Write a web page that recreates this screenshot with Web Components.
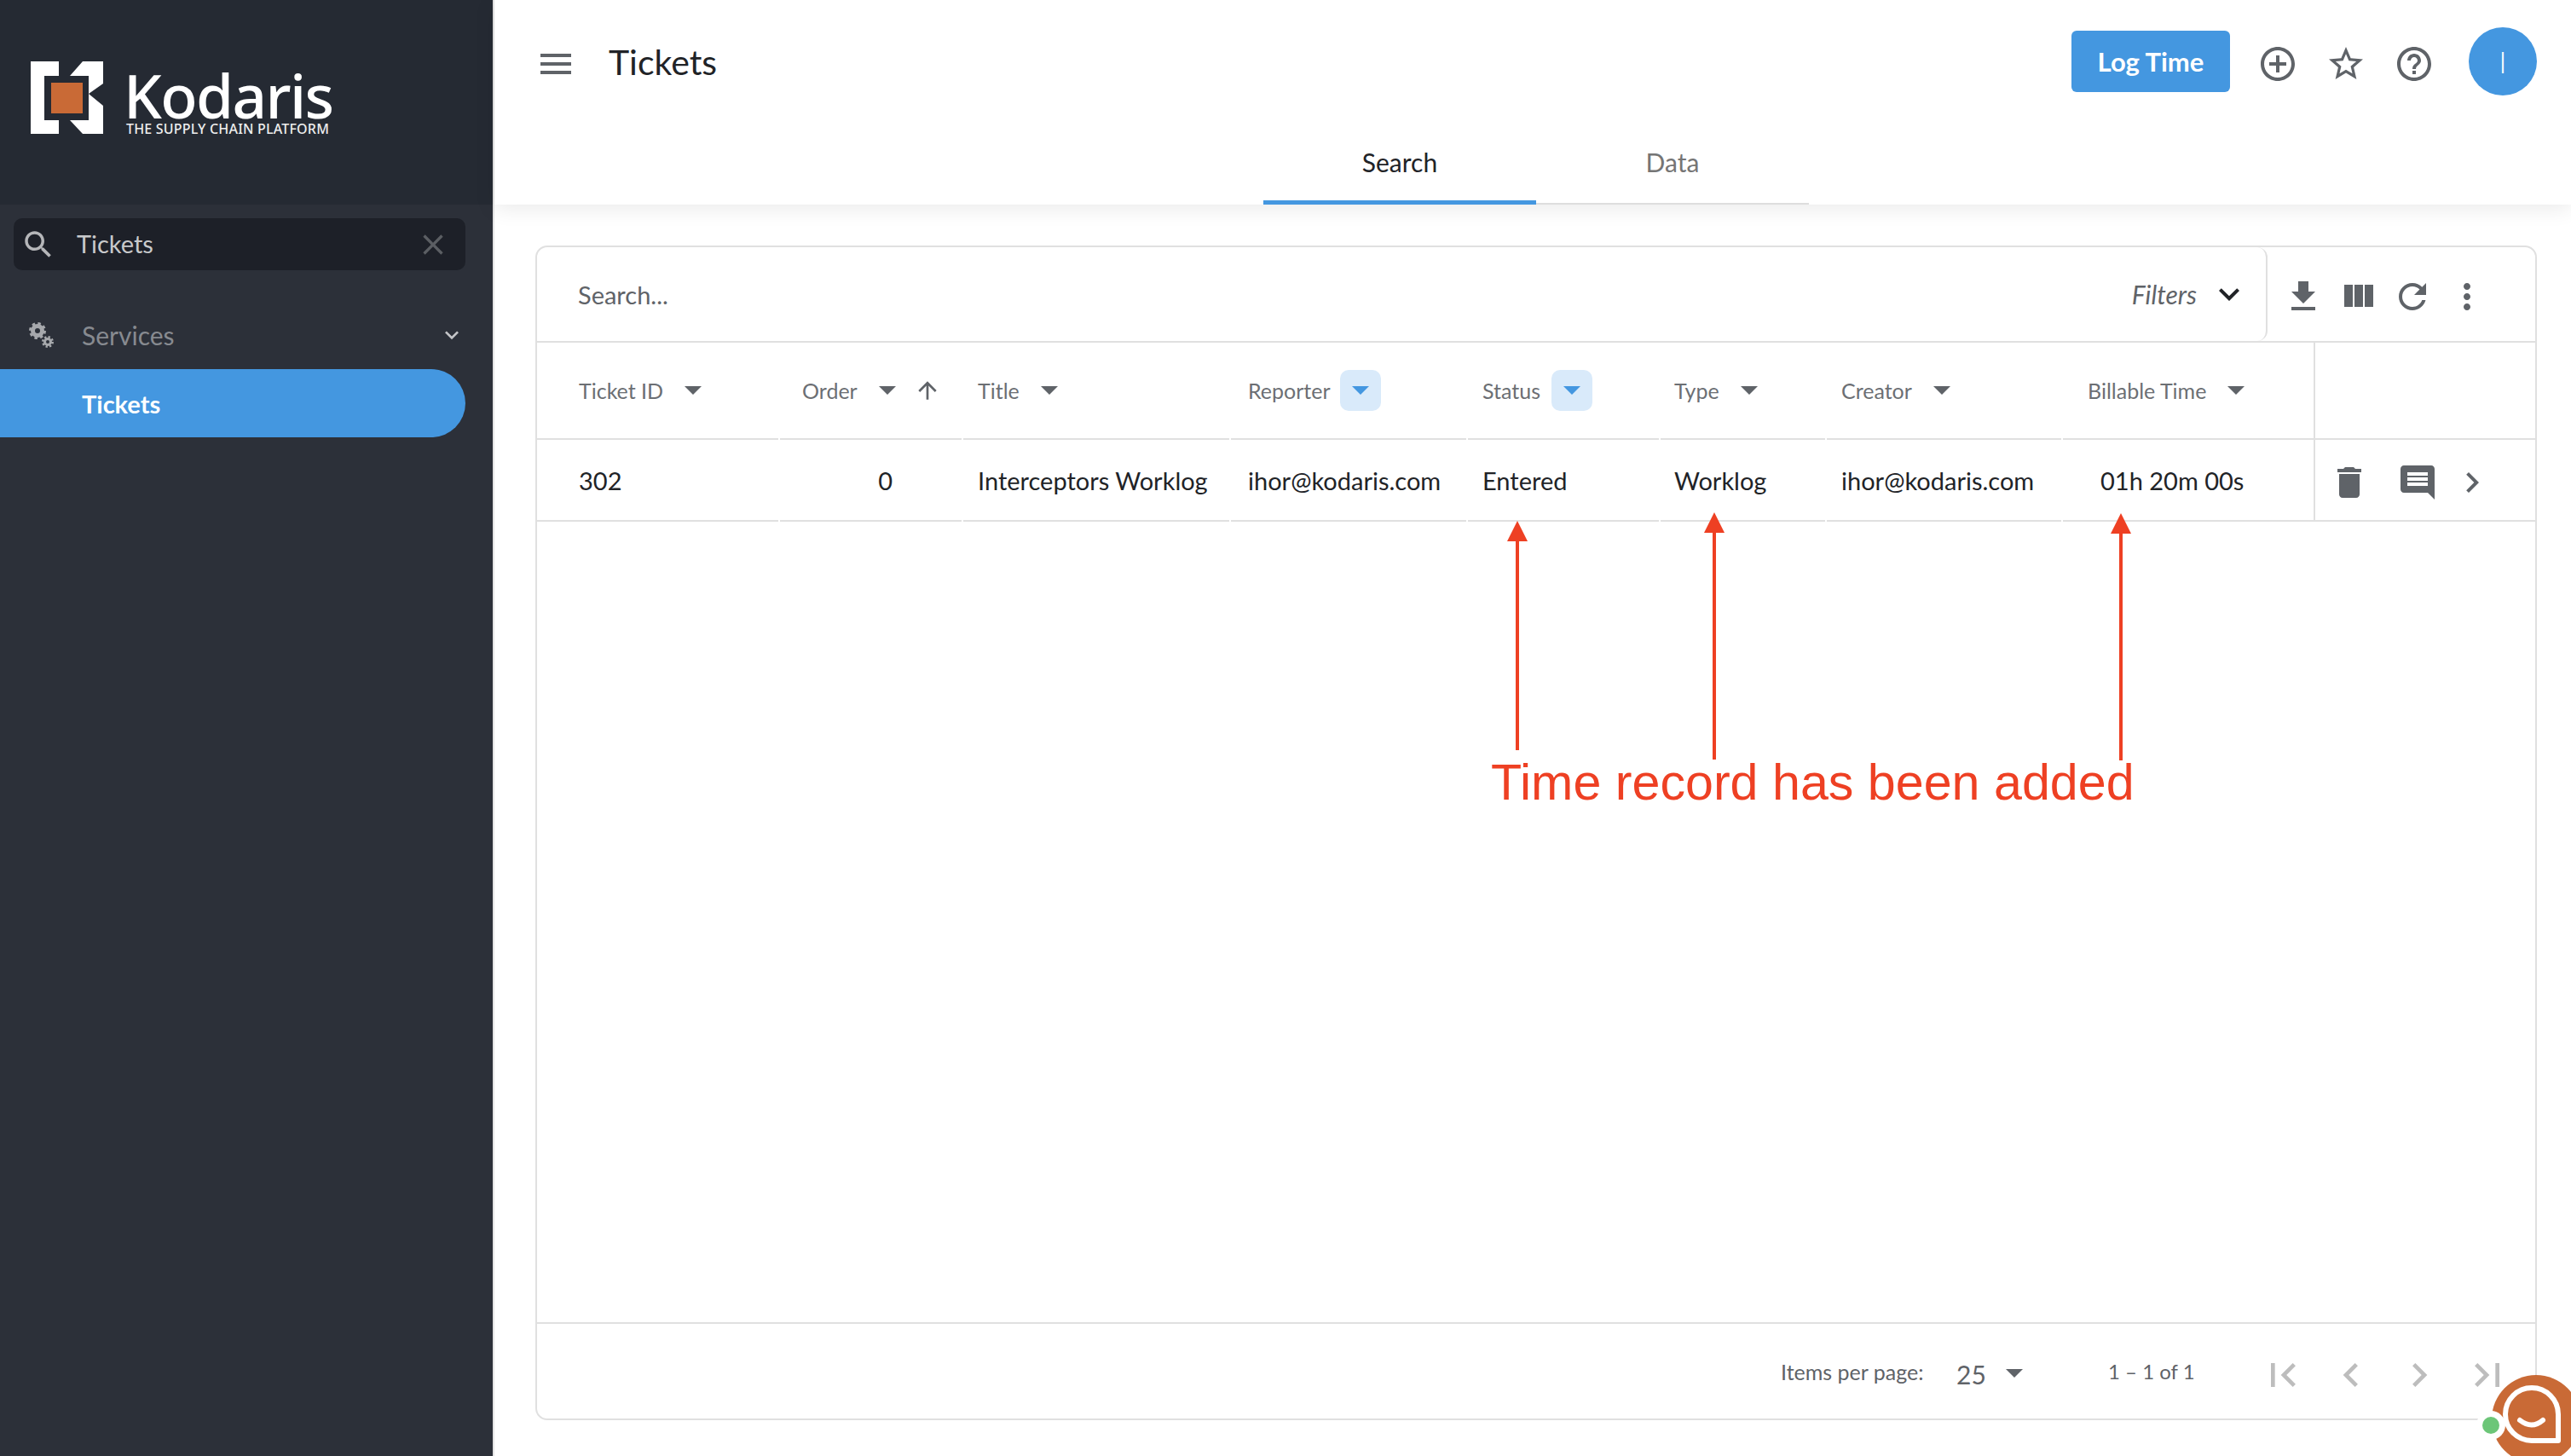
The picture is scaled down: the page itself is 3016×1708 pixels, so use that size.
<!DOCTYPE html>
<html>
<head>
<meta charset="utf-8">
<title>Tickets</title>
<style>
    html, body{ margin: 0; padding: 0; height: 100%; overflow: hidden; background: #fff; }
    body{ font-family: Lato, "Noto Sans", sans-serif; }
    k-app{ width: 3016px; height: 1708px; }
</style>
</head>
<body>
<k-app></k-app>

<script>
const ICONS = {
    menu: 'M3 18h18v-2H3v2zm0-5h18v-2H3v2zm0-7v2h18V6H3z',
    search: 'M15.5 14h-.79l-.28-.27C15.41 12.59 16 11.11 16 9.5 16 5.91 13.09 3 9.5 3S3 5.91 3 9.5 5.91 16 9.5 16c1.61 0 3.09-.59 4.23-1.57l.27.28v.79l5 4.99L20.49 19l-4.99-5zm-6 0C7.01 14 5 11.99 5 9.5S7.01 5 9.5 5 14 7.01 14 9.5 11.99 14 9.5 14z',
    close: 'M19 6.41L17.59 5 12 10.59 6.41 5 5 6.41 10.59 12 5 17.59 6.41 19 12 13.41 17.59 19 19 17.59 13.41 12z',
    down: 'M16.59 8.59L12 13.17 7.41 8.59 6 10l6 6 6-6z',
    add: 'M13 7h-2v4H7v2h4v4h2v-4h4v-2h-4V7zm-1-5C6.48 2 2 6.48 2 12s4.48 10 10 10 10-4.48 10-10S17.52 2 12 2zm0 18c-4.41 0-8-3.59-8-8s3.59-8 8-8 8 3.59 8 8-3.59 8-8 8z',
    star: 'M22 9.24l-7.19-.62L12 2 9.19 8.63 2 9.24l5.46 4.73L5.82 21 12 17.27 18.18 21l-1.63-7.03L22 9.24zM12 15.4l-3.76 2.27 1-4.28-3.32-2.88 4.38-.38L12 6.1l1.71 4.04 4.38.38-3.32 2.88 1 4.28L12 15.4z',
    help: 'M11 18h2v-2h-2v2zm1-16C6.48 2 2 6.48 2 12s4.48 10 10 10 10-4.48 10-10S17.52 2 12 2zm0 18c-4.41 0-8-3.59-8-8s3.59-8 8-8 8 3.59 8 8-3.59 8-8 8zm0-14c-2.21 0-4 1.79-4 4h2c0-1.1.9-2 2-2s2 .9 2 2c0 2-3 1.75-3 5h2c0-2.25 3-2.5 3-5 0-2.21-1.79-4-4-4z',
    download: 'M19 9h-4V3H9v6H5l7 7 7-7zM5 18v2h14v-2H5z',
    columns: 'M10 18h5V5h-5v13zm-6 0h5V5H4v13zM16 5v13h5V5h-5z',
    refresh: 'M17.65 6.35C16.2 4.9 14.21 4 12 4c-4.42 0-7.99 3.58-7.99 8s3.57 8 7.99 8c3.73 0 6.84-2.55 7.73-6h-2.08c-.82 2.33-3.04 4-5.65 4-3.31 0-6-2.69-6-6s2.69-6 6-6c1.66 0 3.14.69 4.22 1.78L13 11h7V4l-2.35 2.35z',
    more: 'M12 8c1.1 0 2-.9 2-2s-.9-2-2-2-2 .9-2 2 .9 2 2 2zm0 2c-1.1 0-2 .9-2 2s.9 2 2 2 2-.9 2-2-.9-2-2-2zm0 6c-1.1 0-2 .9-2 2s.9 2 2 2 2-.9 2-2-.9-2-2-2z',
    trash: 'M6 19c0 1.1.9 2 2 2h8c1.1 0 2-.9 2-2V7H6v12zM19 4h-3.5l-1-1h-5l-1 1H5v2h14V4z',
    comment: 'M21.99 4c0-1.1-.89-2-1.99-2H4c-1.1 0-2 .9-2 2v12c0 1.1.9 2 2 2h14l4 4-.01-18zM18 14H6v-2h12v2zm0-3H6V9h12v2zm0-3H6V6h12v2z',
    next: 'M10 6L8.59 7.41 13.17 12l-4.58 4.59L10 18l6-6z',
    prev: 'M15.41 7.41L14 6l-6 6 6 6 1.41-1.41L10.83 12z',
    first: 'M18.41 16.59L13.82 12l4.59-4.59L17 6l-6 6 6 6zM6 6h2v12H6z',
    last: 'M5.59 7.41L10.18 12l-4.59 4.59L7 18l6-6-6-6zM16 6h2v12h-2z',
    up: 'M4 12l1.41 1.41L11 7.83V20h2V7.83l5.58 5.59L20 12l-8-8-8 8z'
}

class base extends HTMLElement
{
    constructor(){
        super();
        this.shadow = this.attachShadow({mode: 'open'})
        this.shadow.innerHTML = `<style>${this.css}</style>${this.html}`
    }
    get css(){ return '' }
    get html(){ return '' }
}

customElements.define('k-icon', class kIcon extends base {
    connectedCallback(){
        const size = this.getAttribute('size') || 48;
        this.shadow.querySelector('svg').setAttribute('width', size);
        this.shadow.querySelector('svg').setAttribute('height', size);
        this.shadow.querySelector('path').setAttribute('d', ICONS[this.getAttribute('name')]);
    }
    get css(){
        return `:host{ display: block; line-height: 0; color: #5f6368; }
                svg{ display: block; fill: currentColor; }`
    }
    get html(){
        return `<svg viewBox="0 0 24 24"><path d=""/></svg>`
    }
})

customElements.define('k-logo', class kLogo extends base {
    get css(){
        return `:host{ display: flex; gap: 27px; color: #fff; }
                svg{ display: block; flex: none; }
                .words{ margin-top: 12px; }
                .name{ font: 500 71px/56px "Noto Sans", sans-serif; letter-spacing: -1.6px; margin-left: -3px; }
                .tag{ font: 500 16px/16px "Noto Sans", sans-serif; letter-spacing: .2px; margin-top: 3px; white-space: nowrap; color: #eee; }`
    }
    get html(){
        return `<svg width="85" height="85" viewBox="36 72 85 85">
                    <path fill="#fff" d="M36 72H69V89H52V141H69V157H36Z"/>
                    <path fill="#fff" d="M97 72H121V98L104 110V89H82Z"/>
                    <path fill="#fff" d="M104 110L121 124V157H97L82 141H104Z"/>
                    <rect x="60" y="97" width="37" height="36" fill="#c96a36"/>
                </svg>
                <div class="words"><div class="name">Kodaris</div><div class="tag">THE SUPPLY CHAIN PLATFORM</div></div>`
    }
})

customElements.define('k-sidebar', class kSidebar extends base {
    get css(){
        return `:host{ display: flex; flex-direction: column; flex: none; width: 578px; border-right: 2px solid #e4e4e4; background: #2c3039; }
                .brand{ height: 240px; box-sizing: border-box; padding: 72px 0 0 36px; background: #252a33; }
                .find{ display: flex; align-items: center; height: 61px; margin: 16px 32px 0 16px; padding: 0 18px 0 8px; border-radius: 10px; background: #1d2028; color: #c8c9cb; font-size: 29px; }
                .find k-icon:first-child{ color: #b5b6b9; }
                .find span{ flex: 1; margin-left: 24px; margin-top: -2px; }
                .find k-icon:last-child{ color: #5b5e63; }
                .group{ display: flex; align-items: center; height: 80px; margin-top: 36px; padding-right: 32px; color: #878a90; font-size: 30px; }
                .group svg{ margin-left: 33px; flex: none; }
                .group span{ flex: 1; margin-left: 33px; }
                .group k-icon{ color: #c4c5c8; }
                .active{ display: flex; align-items: center; height: 80px; margin-right: 32px; padding-left: 96px; border-radius: 0 40px 40px 0; background: #4497e0; color: #fff; font-size: 29px; font-weight: 700; }`
    }
    get html(){
        return `<div class="brand"><k-logo></k-logo></div>
                <div class="find">
                    <k-icon name="search" size="42"></k-icon><span>Tickets</span><k-icon name="close" size="40"></k-icon>
                </div>
                <div class="group">
                    <svg width="30" height="30" viewBox="0 0 30 30" fill="none" stroke="#a6a8ac">
                        <circle cx="11" cy="10" r="5.5" stroke-width="5"/>
                        <circle cx="11" cy="10" r="8" stroke-width="4" stroke-dasharray="3.2 3.1"/>
                        <circle cx="23" cy="23" r="3.5" stroke-width="3"/>
                        <circle cx="23" cy="23" r="5.5" stroke-width="3" stroke-dasharray="2.2 2.1"/>
                    </svg>
                    <span>Services</span><k-icon name="down" size="32"></k-icon>
                </div>
                <div class="active">Tickets</div>`
    }
})

customElements.define('k-topbar', class kTopbar extends base {
    get css(){
        return `:host{ display: block; height: 240px; position: relative; z-index: 1; background: #fff; box-shadow: 0 4px 24px rgba(0,0,0,.09); }
                .top{ display: flex; align-items: center; height: 144px; padding: 0 40px 0 48px; }
                .menu{ padding-top: 6px; }
                h1{ flex: 1; margin: 0 0 0 38px; font-size: 41px; font-weight: 400; color: #212327; }
                button{ width: 186px; height: 72px; margin-right: 16px; border: 0; border-radius: 6px; background: #4497e0; color: #fff; font: 700 31px Lato, sans-serif; }
                .tool{ display: flex; justify-content: center; width: 80px; padding-top: 6px; }
                .avatar{ display: flex; align-items: center; justify-content: center; width: 80px; height: 80px; margin-left: 24px; border-radius: 50%; background: #4497e0; color: #fff; font-size: 36px; font-weight: 300; }
                .tabs{ display: flex; justify-content: center; padding-left: 8px; }
                .tab{ display: flex; align-items: center; justify-content: center; box-sizing: border-box; width: 320px; height: 96px; padding-bottom: 3px; border-bottom: 2px solid #dedede; color: #757575; font-size: 30px; }
                .tab.on{ padding-bottom: 0; border-bottom: 5px solid #4497e0; color: #212327; }`
    }
    get html(){
        return `<div class="top">
                    <k-icon class="menu" name="menu" size="48"></k-icon>
                    <h1>Tickets</h1>
                    <button>Log Time</button>
                    <div class="tool"><k-icon name="add"></k-icon></div>
                    <div class="tool"><k-icon name="star"></k-icon></div>
                    <div class="tool"><k-icon name="help"></k-icon></div>
                    <div class="avatar">I</div>
                </div>
                <div class="tabs"><div class="tab on">Search</div><div class="tab">Data</div></div>`
    }
})

// one header cell: label, filter arrow, optional sort arrow
customElements.define('k-head', class kHead extends base {
    connectedCallback(){
        if (this.hasAttribute('active')){
            this.shadow.querySelector('.tri').classList.add('active');
        }
        if (this.hasAttribute('sorted')){
            this.shadow.querySelector('.up').style.display = 'block';
        }
        this.shadow.querySelector('.tri').style.marginLeft = (this.getAttribute('gap') || 25) + 'px';
    }
    get css(){
        return `:host{ display: flex; align-items: center; box-sizing: border-box; height: 114px; border-bottom: 2px solid #e0e0e0; color: #6c6f74; font-size: 25px; white-space: nowrap; }
                .tri{ display: flex; align-items: center; justify-content: center; width: 20px; height: 48px; }
                .tri::after{ content: ''; border-left: 10px solid transparent; border-right: 10px solid transparent; border-top: 10px solid #5f6368; }
                .tri.active{ width: 48px; border-radius: 10px; background: #d9eafa; }
                .tri.active::after{ border-top-color: #4497e0; }
                .up{ display: none; margin-left: 21px; }`
    }
    get html(){
        return `<slot></slot><div class="tri"></div><k-icon class="up" name="up" size="32"></k-icon>`
    }
})

customElements.define('k-tickets', class kTickets extends base {
    get css(){
        return `:host{ display: flex; flex-direction: column; box-sizing: border-box; height: 1378px; border: 2px solid #e0e0e0; border-radius: 14px; color: #212327; }
                .bar{ display: flex; height: 112px; box-sizing: border-box; border-bottom: 2px solid #e0e0e0; }
                .find{ display: flex; align-items: center; width: 2030px; box-sizing: border-box; padding: 0 19px 0 48px; border-right: 2px solid #e0e0e0; border-radius: 0 12px 12px 0; color: #5f6368; font-size: 29px; }
                .find span{ flex: 1; }
                .find em{ font-size: 30px; margin-right: 14px; }
                .find k-icon{ color: #212327; }
                .tools{ display: flex; padding: 34px 0 0 18px; gap: 16px; }
                .grid{ display: grid; grid-template-columns: 283px 213px 312px 276px 224px 193px 275px 294px 258px; grid-template-rows: 114px 96px; column-gap: 2px; }
                .cell{ display: flex; align-items: center; box-sizing: border-box; border-bottom: 2px solid #e0e0e0; font-size: 29px; white-space: nowrap; }
                .act{ margin-left: -2px; border-left: 2px solid #e0e0e0; }
                .row{ padding: 6px 0 0 16px; gap: 32px; align-items: center; }
                .row k-icon:last-child{ margin-left: -16px; }
                .foot{ display: flex; align-items: center; margin-top: auto; height: 113px; box-sizing: border-box; border-top: 2px solid #e0e0e0; padding-left: 1459px; color: #5f6368; font-size: 25px; white-space: nowrap; }
                .label{ width: 206px; }
                .size{ width: 58px; font-size: 30px; padding-top: 6px; }
                .tri{ width: 0; height: 0; margin-top: 5px; border-left: 10px solid transparent; border-right: 10px solid transparent; border-top: 10px solid #5f6368; }
                .range{ margin-left: 100px; width: 165px; font-size: 24px; }
                .pager{ display: flex; padding-top: 8px; }
                .pager div{ display: flex; justify-content: center; width: 80px; }
                .pager k-icon{ color: #bdbdbd; }`
    }
    get html(){
        return `<div class="bar">
                    <div class="find"><span>Search...</span><em>Filters</em><k-icon name="down" size="48"></k-icon></div>
                    <div class="tools">
                        <k-icon name="download"></k-icon><k-icon name="columns"></k-icon><k-icon name="refresh"></k-icon><k-icon name="more"></k-icon>
                    </div>
                </div>
                <div class="grid">
                    <k-head style="padding-left:49px">Ticket ID</k-head>
                    <k-head style="padding-left:26px" sorted>Order</k-head>
                    <k-head style="padding-left:17px">Title</k-head>
                    <k-head style="padding-left:20px" gap="11" active>Reporter</k-head>
                    <k-head style="padding-left:17px" gap="13" active>Status</k-head>
                    <k-head style="padding-left:16px">Type</k-head>
                    <k-head style="padding-left:17px">Creator</k-head>
                    <k-head style="padding-left:29px">Billable Time</k-head>
                    <div class="cell act"></div>

                    <div class="cell" style="padding-left:49px">302</div>
                    <div class="cell" style="justify-content:flex-end;padding-right:81px">0</div>
                    <div class="cell" style="padding-left:17px">Interceptors Worklog</div>
                    <div class="cell" style="padding-left:20px">ihor@kodaris.com</div>
                    <div class="cell" style="padding-left:17px">Entered</div>
                    <div class="cell" style="padding-left:16px">Worklog</div>
                    <div class="cell" style="padding-left:17px">ihor@kodaris.com</div>
                    <div class="cell" style="padding-left:44px">01h 20m 00s</div>
                    <div class="cell act row">
                        <k-icon name="trash"></k-icon><k-icon name="comment"></k-icon><k-icon name="next"></k-icon>
                    </div>
                </div>
                <div class="foot">
                    <div class="label">Items per page:</div>
                    <div class="size">25</div>
                    <div class="tri"></div>
                    <div class="range">1 – 1 of 1</div>
                    <div class="pager">
                        <div><k-icon name="first" size="56"></k-icon></div>
                        <div><k-icon name="prev" size="56"></k-icon></div>
                        <div><k-icon name="next" size="56"></k-icon></div>
                        <div><k-icon name="last" size="56"></k-icon></div>
                    </div>
                </div>`
    }
})

// red hand drawn note that sits over the table
customElements.define('k-note', class kNote extends base {
    get css(){
        return `:host{ display: block; position: absolute; left: 1740px; top: 600px; width: 780px; height: 350px; }
                svg{ position: absolute; left: 0; top: 0; }
                div{ position: absolute; left: 9px; top: 288px; font: 59.2px/59px "Liberation Sans", Arial, sans-serif; color: #ee4023; white-space: nowrap; }`
    }
    get html(){
        return `<svg width="780" height="300" viewBox="1740 600 780 300" fill="#ee4023" stroke="none">
                    <path d="M1778 634h4v246h-4zM1780 611l12 24h-24z"/>
                    <path d="M2009 624h4v267h-4zM2011 601l12 24h-24z"/>
                    <path d="M2486 625h4v267h-4zM2488 602l12 24h-24z"/>
                </svg>
                <div>Time record has been added</div>`
    }
})

customElements.define('k-chat', class kChat extends base {
    get css(){
        return `:host{ display: block; position: absolute; right: 0; bottom: 0; width: 110px; height: 110px; }
                svg{ display: block; }`
    }
    get html(){
        return `<svg width="110" height="110" viewBox="2906 1598 110 110">
                    <circle cx="2975" cy="1665" r="52" fill="#c96a36"/>
                    <circle cx="2922" cy="1672" r="17" fill="#fff"/>
                    <circle cx="2922" cy="1672" r="10" fill="#6cc678"/>
                    <path d="M3001 1690H2970A31 31 0 1 1 3001 1659Z" fill="none" stroke="#fff" stroke-width="6" stroke-linejoin="round"/>
                    <path d="M2956 1666Q2970 1677 2983 1666" fill="none" stroke="#fff" stroke-width="6" stroke-linecap="round"/>
                </svg>`
    }
})

customElements.define('k-app', class kApp extends base {
    get css(){
        return `:host{ display: flex; position: relative; overflow: hidden; }
                main{ flex: 1; min-width: 0; display: flex; flex-direction: column; }
                .content{ padding: 48px 40px 0 48px; }`
    }
    get html(){
        return `<k-sidebar></k-sidebar>
                <main>
                    <k-topbar></k-topbar>
                    <div class="content"><k-tickets></k-tickets></div>
                </main>
                <k-note></k-note>
                <k-chat></k-chat>`
    }
})
</script>
</body>
</html>
